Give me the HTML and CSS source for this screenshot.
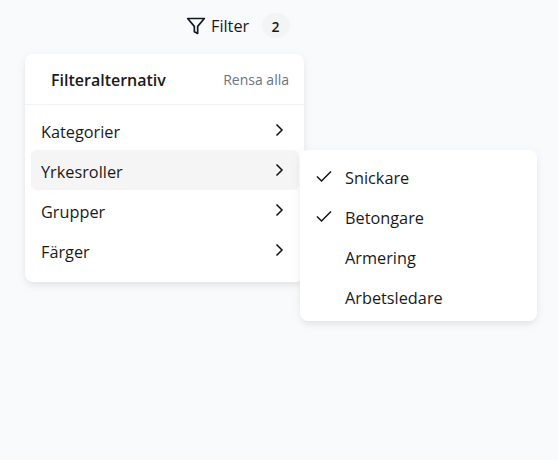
FILE: index.html
```html
<!DOCTYPE html>
<html lang="sv">
<head>
<meta charset="utf-8">
<title>Filter</title>
<link rel="stylesheet" href="styles.css">
</head>
<body>
<div class="wrap">
  <div class="trigger">
    <svg class="funnel" width="20" height="20" viewBox="0 0 24 24" fill="none" stroke="#111827" stroke-width="2" stroke-linecap="round" stroke-linejoin="round"><polygon points="22 3 2 3 10 12.46 10 19 14 21 14 12.46 22 3"/></svg>
    <span class="trigger-label">Filter</span>
    <span class="badge">2</span>
  </div>
  <div class="panel">
    <div class="panel-head">
      <span class="panel-title">Filteralternativ</span>
      <span class="clear">Rensa alla</span>
    </div>
    <ul class="menu">
      <li class="item"><span>Kategorier</span><svg class="chev" width="16" height="16" viewBox="0 0 16 16"><path d="M5.500 2.500 11 8l-5.500 5.500" fill="none" stroke="#111" stroke-width="1.500"/></svg></li>
      <li class="item active"><span>Yrkesroller</span><svg class="chev" width="16" height="16" viewBox="0 0 16 16"><path d="M5.500 2.500 11 8l-5.500 5.500" fill="none" stroke="#111" stroke-width="1.500"/></svg></li>
      <li class="item"><span>Grupper</span><svg class="chev" width="16" height="16" viewBox="0 0 16 16"><path d="M5.500 2.500 11 8l-5.500 5.500" fill="none" stroke="#111" stroke-width="1.500"/></svg></li>
      <li class="item"><span>Färger</span><svg class="chev" width="16" height="16" viewBox="0 0 16 16"><path d="M5.500 2.500 11 8l-5.500 5.500" fill="none" stroke="#111" stroke-width="1.500"/></svg></li>
    </ul>
    <ul class="submenu">
      <li class="sub-item"><svg class="check" width="16" height="16" viewBox="0 0 16 16"><path d="M1 8.500 5.500 13 15 3.500" fill="none" stroke="#111" stroke-width="1.500"/></svg><span>Snickare</span></li>
      <li class="sub-item"><svg class="check" width="16" height="16" viewBox="0 0 16 16"><path d="M1 8.500 5.500 13 15 3.500" fill="none" stroke="#111" stroke-width="1.500"/></svg><span>Betongare</span></li>
      <li class="sub-item"><span class="nocheck"></span><span>Armering</span></li>
      <li class="sub-item"><span class="nocheck"></span><span>Arbetsledare</span></li>
    </ul>
  </div>
</div>
</body>
</html>
```
FILE: styles.css
```css
* { box-sizing: border-box; }
html, body { margin: 0; height: 100%; }
body {
  background: #f9fafb;
  color: #1a1a1a;
  font-family: "Open Sans", "Noto Sans", sans-serif;
  font-size: 16.3px;
  overflow: hidden;
}
.wrap { padding: 13px 0 0 25px; }
.trigger {
  display: flex;
  align-items: center;
  width: 265px;
  height: 25px;
  padding-left: 161px;
}
.funnel { flex: none; }
.trigger-label { margin-left: 5px; padding-top: 1px; }
.badge {
  margin-left: 13px;
  width: 28px;
  height: 25px;
  padding: 1px 1px 0 0;
  border-radius: 13px;
  background: #f3f4f6;
  font-size: 14px;
  font-weight: 600;
  display: flex;
  align-items: center;
  justify-content: center;
}
.panel {
  position: relative;
  margin-top: 16px;
  width: 279px;
  height: 228px;
  background: #fff;
  border-radius: 8px;
  box-shadow: 0 4px 6px -1px rgba(0,0,0,.06), 0 2px 12px rgba(0,0,0,.05);
}
.panel-head {
  height: 51px;
  padding: 2px 15px 0 26px;
  display: flex;
  align-items: center;
  justify-content: space-between;
  border-bottom: 1px solid #f3f4f6;
}
.panel-title { font-weight: 600; font-size: 16px; }
.clear { font-size: 14px; color: #6b7280; margin-top: -2px; }
.menu, .submenu { list-style: none; margin: 0; padding: 0; }
.menu { padding: 5px 5px 6px 6px; }
.item {
  height: 40px;
  padding: 3px 12px 0 10px;
  display: flex;
  align-items: center;
  justify-content: space-between;
  border-radius: 6px;
}
.chev { margin-top: -4px; }
.item.active { background: #f5f5f5; }
.submenu {
  position: absolute;
  left: 275px;
  top: 96px;
  width: 237px;
  height: 171px;
  padding: 7px 0 0 16px;
  background: #fff;
  border-radius: 8px;
  box-shadow: 0 4px 6px -1px rgba(0,0,0,.06), 0 2px 12px rgba(0,0,0,.05);
}
.sub-item { height: 40px; display: flex; align-items: center; gap: 13px; padding-top: 1px; }
.check, .nocheck { flex: none; width: 16px; height: 16px; display: block; margin-top: -3px; }
```
